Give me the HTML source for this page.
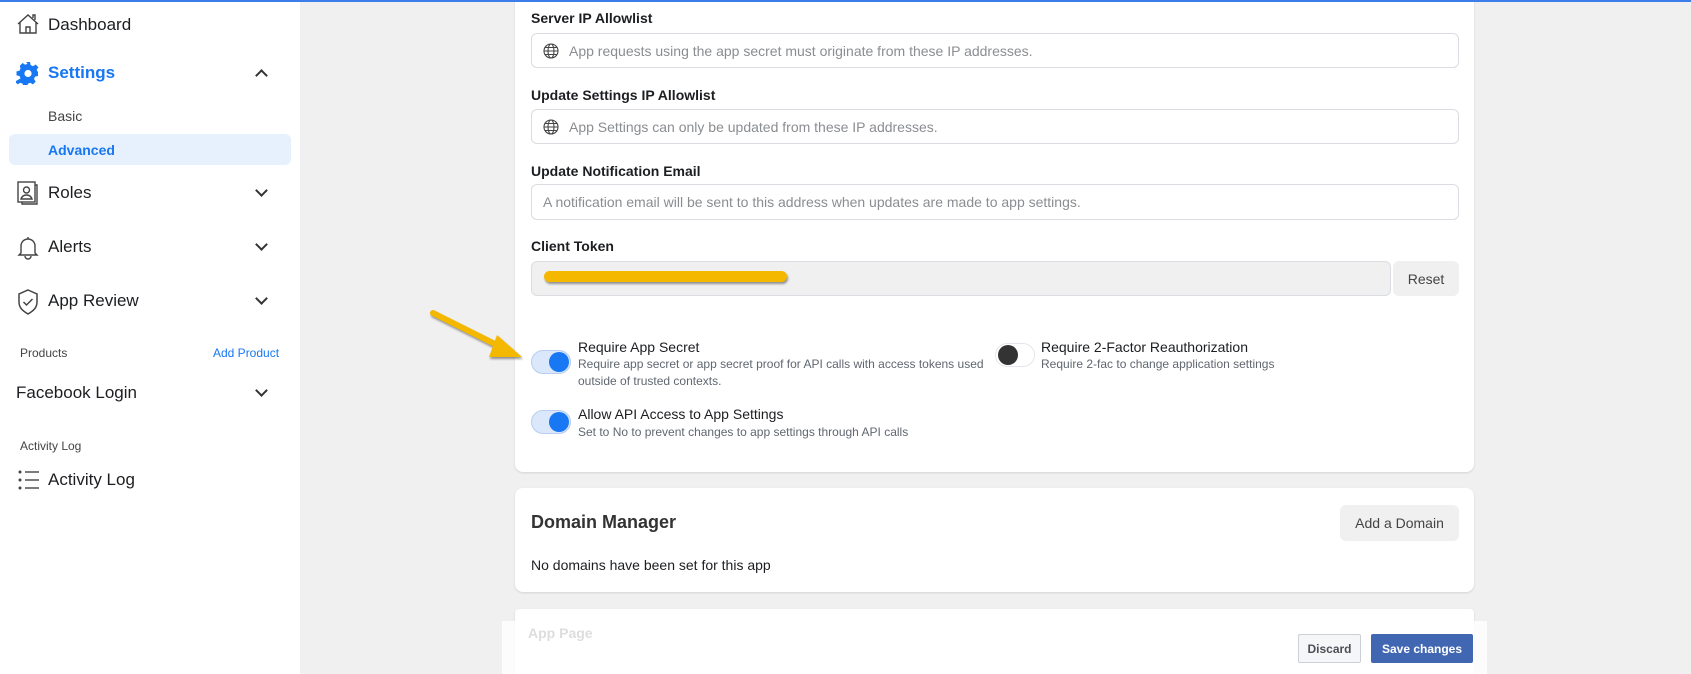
<!DOCTYPE html>
<html style="width:1691px;height:674px;overflow:hidden"><head><meta charset="utf-8"><style>
*{box-sizing:border-box;margin:0;padding:0}
body{width:1691px;height:674px;overflow:hidden;background:#f0f0f0;font-family:"Liberation Sans",Arial,sans-serif;position:relative;color:#1c1e21}
.a{position:absolute}
#top{left:0;top:0;width:1691px;height:2px;background:#3b7de9;z-index:10}
#side{left:0;top:2px;width:300px;height:672px;background:#fff}
.nav{position:absolute;left:48px;font-size:17px;color:#1c1e21;line-height:20px}
.chev{position:absolute;left:257px;width:9px;height:9px;border-right:2px solid #333;border-bottom:2px solid #333;transform:rotate(45deg)}
.ic{position:absolute;left:16px}
.card{position:absolute;background:#fff;border-radius:8px;box-shadow:0 1px 2px rgba(0,0,0,.12)}
.lbl{position:absolute;left:531px;font-size:14px;font-weight:bold;color:#1c1e21}
.inp{position:absolute;left:531px;width:928px;border:1px solid #dadde1;border-radius:6px;background:#fff;font-size:14px;color:#8a8d91;padding-left:11px;display:flex;align-items:center}
.glob{width:16px;height:16px;margin-right:10px}
.tog{position:absolute;width:40px;height:24px;border-radius:12px;background:#dbe7fb;border:1px solid #b8cdf0}
.tog i{position:absolute;right:1px;top:1px;width:20px;height:20px;border-radius:50%;background:#1877f2}
.tt{position:absolute;font-size:14px;color:#1c1e21}
.td{position:absolute;font-size:12px;color:#606770;line-height:17px}
</style></head><body>
<div class="a" id="top"></div>
<div class="a" id="side"></div>
<svg class="ic" style="top:12px" width="24" height="24" viewBox="0 0 24 24" fill="none" stroke="#444" stroke-width="1.4"><path d="M2 12L12 3l10 9M4 10v11h16V10M10 21v-6h4v6M17 6V3h2v5"/></svg>
<div class="nav" style="top:15px">Dashboard</div>
<svg class="ic" style="top:61px" width="24" height="24" viewBox="0 0 24 24"><path fill="#1877f2" d="M10 1h4l.6 3 2.4 1.2 2.6-1.7 2.8 2.8-1.7 2.6L21.9 11l.1 0 0 4-3 .6-1 2.4 1.7 2.6-2.8 2.8-2.6-1.7-2.4 1-.6 3h-4l-.6-3-2.4-1-2.6 1.7-2.8-2.8L4.5 17.4 3.5 15 .5 14.4v-4l3-.6 1-2.4L3.8 4.8l2.8-2.8 2.6 1.7L11.6 2.7z"/><circle cx="12" cy="12.5" r="3.6" fill="#fff"/></svg>
<div class="nav" style="top:63px;color:#1877f2;font-weight:bold">Settings</div>
<div class="chev" style="top:71px;transform:rotate(-135deg)"></div>
<div class="nav" style="top:106px;font-size:14px;color:#444">Basic</div>
<div class="a" style="left:9px;top:134px;width:282px;height:31px;background:#e7f0fd;border-radius:6px"></div>
<div class="nav" style="top:140px;font-size:14px;color:#1877f2;font-weight:bold">Advanced</div>
<svg class="ic" style="top:181px" width="24" height="24" viewBox="0 0 24 24" fill="none" stroke="#444" stroke-width="1.4"><rect x="2" y="1" width="17" height="20"/><path d="M19 4h2v19H6v-2"/><circle cx="10.5" cy="9" r="3"/><path d="M5 18c1-3 3-4 5.5-4s4.5 1 5.5 4z"/></svg>
<div class="nav" style="top:183px">Roles</div><div class="chev" style="top:186px"></div>
<svg class="ic" style="top:235px" width="24" height="26" viewBox="0 0 24 26" fill="none" stroke="#444" stroke-width="1.4"><path d="M12 2v2M5 18V11a7 7 0 0114 0v7l2 2H3z"/><path d="M9 21a3 3 0 006 0"/></svg>
<div class="nav" style="top:237px">Alerts</div><div class="chev" style="top:240px"></div>
<svg class="ic" style="top:289px" width="24" height="26" viewBox="0 0 24 26" fill="none" stroke="#444" stroke-width="1.5"><path d="M12 1L21 5v8c0 6-4 9-9 12-5-3-9-6-9-12V5z"/><path d="M7.5 13l3 3 6-6"/></svg>
<div class="nav" style="top:291px">App Review</div><div class="chev" style="top:294px"></div>
<div class="nav" style="top:343px;left:20px;font-size:12px;color:#444">Products</div>
<div class="nav" style="top:343px;left:213px;font-size:12px;color:#1877f2">Add Product</div>
<div class="nav" style="top:383px;left:16px">Facebook Login</div><div class="chev" style="top:386px"></div>
<div class="nav" style="top:436px;left:20px;font-size:12px;color:#444">Activity Log</div>
<svg class="ic" style="top:469px;left:18px" width="22" height="22" viewBox="0 0 22 22" fill="#444"><circle cx="2" cy="3" r="1.5"/><circle cx="2" cy="11" r="1.5"/><circle cx="2" cy="19" r="1.5"/><rect x="7" y="2.3" width="14" height="1.4"/><rect x="7" y="10.3" width="14" height="1.4"/><rect x="7" y="18.3" width="14" height="1.4"/></svg>
<div class="nav" style="top:470px">Activity Log</div>

<div class="card" style="left:515px;top:-10px;width:959px;height:482px"></div>
<div class="lbl" style="top:10px">Server IP Allowlist</div>
<div class="inp" style="top:33px;height:35px"><svg class="glob" viewBox="0 0 16 16" fill="none" stroke="#444" stroke-width="1.1"><circle cx="8" cy="8" r="7"/><ellipse cx="8" cy="8" rx="3" ry="7"/><path d="M1 8h14M2 4.5h12M2 11.5h12"/></svg>App requests using the app secret must originate from these IP addresses.</div>
<div class="lbl" style="top:87px">Update Settings IP Allowlist</div>
<div class="inp" style="top:109px;height:35px"><svg class="glob" viewBox="0 0 16 16" fill="none" stroke="#444" stroke-width="1.1"><circle cx="8" cy="8" r="7"/><ellipse cx="8" cy="8" rx="3" ry="7"/><path d="M1 8h14M2 4.5h12M2 11.5h12"/></svg>App Settings can only be updated from these IP addresses.</div>
<div class="lbl" style="top:163px">Update Notification Email</div>
<div class="inp" style="top:184px;height:36px">A notification email will be sent to this address when updates are made to app settings.</div>
<div class="lbl" style="top:238px">Client Token</div>
<div class="inp" style="top:261px;height:35px;width:860px;background:#f0f0f0"></div>
<div class="a" style="left:544px;top:271px;width:243px;height:11px;background:#f5b800;border-radius:6px;box-shadow:1px 2px 2px rgba(0,0,0,.4)"></div>
<div class="a" style="left:1393px;top:261px;width:66px;height:35px;background:#f0f0f0;border-radius:6px;font-size:14px;color:#444;display:flex;align-items:center;justify-content:center">Reset</div>
<svg class="a" style="left:425px;top:305px" width="105" height="60" viewBox="0 0 105 60"><path d="M8 8L80 44" stroke="#f5b800" stroke-width="6" stroke-linecap="round" style="filter:drop-shadow(1px 2px 1px rgba(0,0,0,.4))"/><path d="M72 30L97 52 64 52z" fill="#f5b800" style="filter:drop-shadow(1px 2px 1px rgba(0,0,0,.4))"/></svg>
<div class="tog" style="left:531px;top:350px"><i></i></div>
<div class="tt" style="left:578px;top:339px">Require App Secret</div>
<div class="td" style="left:578px;top:356px">Require app secret or app secret proof for API calls with access tokens used<br>outside of trusted contexts.</div>
<div class="tog" style="left:995px;top:343px;background:#fff;border-color:#e4e6eb"><i style="left:2px;right:auto;background:#333"></i></div>
<div class="tt" style="left:1041px;top:339px">Require 2-Factor Reauthorization</div>
<div class="td" style="left:1041px;top:356px">Require 2-fac to change application settings</div>
<div class="tog" style="left:531px;top:410px"><i></i></div>
<div class="tt" style="left:578px;top:406px">Allow API Access to App Settings</div>
<div class="td" style="left:578px;top:424px">Set to No to prevent changes to app settings through API calls</div>

<div class="card" style="left:515px;top:488px;width:959px;height:104px"></div>
<div class="a" style="left:531px;top:512px;font-size:18px;font-weight:bold;color:#333">Domain Manager</div>
<div class="a" style="left:1340px;top:505px;width:119px;height:36px;background:#f0f0f0;border-radius:6px;font-size:14px;color:#444;display:flex;align-items:center;justify-content:center">Add a Domain</div>
<div class="a" style="left:531px;top:557px;font-size:14px;color:#1c1e21">No domains have been set for this app</div>

<div class="card" style="left:515px;top:609px;width:959px;height:65px;border-radius:4px 4px 0 0"></div>
<div class="a" style="left:502px;top:621px;width:985px;height:53px;background:rgba(255,255,255,.8)"></div>
<div class="a" style="left:528px;top:625px;font-size:14px;font-weight:bold;color:#ddd">App Page</div>
<div class="a" style="left:1298px;top:634px;width:63px;height:29px;background:#f5f6f7;border:1px solid #ccd0d5;border-radius:2px;font-size:12px;font-weight:bold;color:#4b4f56;display:flex;align-items:center;justify-content:center">Discard</div>
<div class="a" style="left:1371px;top:634px;width:102px;height:29px;background:#4267b2;border-radius:2px;font-size:12px;font-weight:bold;color:#fff;display:flex;align-items:center;justify-content:center">Save changes</div>
</body></html>
